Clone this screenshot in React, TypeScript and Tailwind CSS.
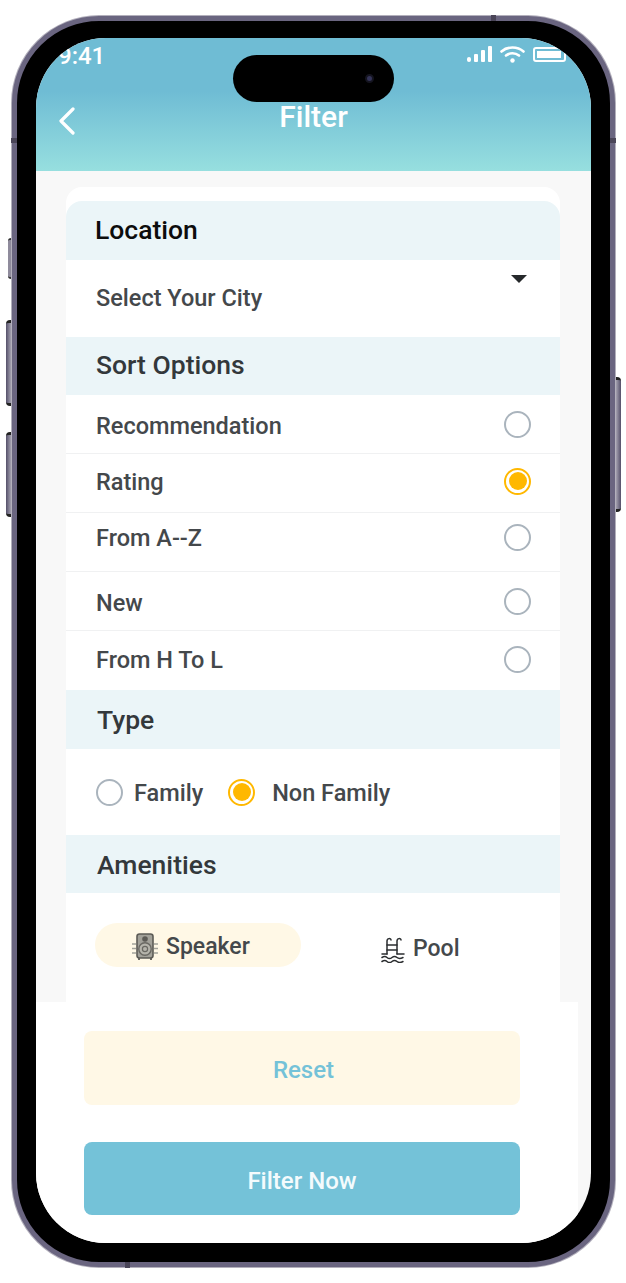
const sortOptions = [
  { label: "Recommendation", text: "mt-[4px]", radio: "mb-[2px]", checked: false },
  { label: "Rating", text: "mb-[2px]", radio: "mb-[6px]", checked: true },
  { label: "From A--Z", text: "mb-[8px]", radio: "mb-[12px]", checked: false },
  { label: "New", text: "mt-[4px]", radio: "mb-[2px]", checked: false },
  { label: "From H To L", text: "mb-[2px]", radio: "mb-[4px]", checked: false },
];

function Radio({ checked, className = "" }: { checked: boolean; className?: string }) {
  if (checked) {
    return (
      <span className={`flex h-[27px] w-[27px] shrink-0 items-center justify-center rounded-full border-2 border-[#ffb800] ${className}`}>
        <span className="h-[18px] w-[18px] rounded-full bg-[#ffb800]" />
      </span>
    );
  }
  return <span className={`h-[27px] w-[27px] shrink-0 rounded-full border-2 border-[#aab4bd] ${className}`} />;
}

function SpeakerIcon() {
  return (
    <svg width="26" height="28" viewBox="0 0 26 28" fill="none">
      <rect x="5" y="1" width="16" height="24" rx="2.5" fill="#a3a29a" stroke="#5c5b56" strokeWidth="1.6" />
      <circle cx="13" cy="6" r="2.8" fill="#5c5b56" />
      <circle cx="13" cy="16" r="6.2" fill="#b5b4ab" stroke="#6a6963" strokeWidth="1.4" />
      <circle cx="13" cy="16" r="2.6" fill="none" stroke="#6a6963" strokeWidth="1.2" />
      <path d="M7 25v2M19 25v2" stroke="#5c5b56" strokeWidth="1.8" />
      <path d="M0 11h4M0 15.500h4M0 20h4M22 11h4M22 15.500h4M22 20h4" stroke="#a3a29a" strokeWidth="1.3" />
    </svg>
  );
}

function PoolIcon() {
  return (
    <svg width="24" height="26" viewBox="0 0 24 26" fill="none" stroke="#2b2e30" strokeWidth="1.5" strokeLinecap="round">
      <path d="M6 17V4c0-3 4-3 4-1" />
      <path d="M16 17V4c0-3 4-3 4-1" />
      <path d="M6 8h10M6 13h10" />
      <path d="M1 17h5M16 17h7" />
      <path d="M1 20.500c2-1.300 3.500-1.300 5 0s3.500 1.300 5 0 3.500-1.300 5 0 3.500 1.300 6 0" />
      <path d="M1 24.500c2-1.300 3.500-1.300 5 0s3.500 1.300 5 0 3.500-1.300 5 0 3.500 1.300 6 0" />
    </svg>
  );
}

export default function App() {
  return (
    <div className="relative h-[1283px] w-[626px] overflow-hidden bg-white pl-[12px] pt-[16px] [font-family:Roboto,sans-serif]">
      {/* Side buttons */}
      <span className="absolute left-[8px] top-[238px] h-[41px] w-[3px] rounded-l-sm border-y-2 border-[#333] bg-[#8f8b9c]" />
      <span className="absolute left-[6px] top-[320px] h-[86px] w-[5px] rounded-l-sm border-y-[3px] border-[#222] bg-gradient-to-r from-[#55506a] to-[#a5a2b0]" />
      <span className="absolute left-[6px] top-[432px] h-[85px] w-[5px] rounded-l-sm border-y-[3px] border-[#222] bg-gradient-to-r from-[#55506a] to-[#a5a2b0]" />
      <span className="absolute left-[616px] top-[377px] h-[135px] w-[5px] rounded-r-sm border-y-[3px] border-[#222] bg-gradient-to-l from-[#55506a] to-[#a5a2b0]" />

      {/* Antenna bands */}
      <span className="absolute left-[491px] top-[15px] z-10 h-[6px] w-[5px] bg-[#4a4558]" />
      <span className="absolute left-[125px] top-[1262px] z-10 h-[6px] w-[5px] bg-[#4a4558]" />
      <span className="absolute left-[11px] top-[138px] z-10 h-[5px] w-[6px] bg-[#4a4558]" />
      <span className="absolute left-[610px] top-[138px] z-10 h-[5px] w-[6px] bg-[#4a4558]" />

      {/* Phone frame */}
      <div className="h-[1251px] w-[603px] rounded-[87px] border-[5px] border-[#6a6580] bg-black pb-[19px] pl-[19px] pr-[19px] pt-[17px] shadow-[0_0_0_1px_#b3b0bc]">
        <div className="relative flex h-full w-full flex-col overflow-hidden rounded-[70px] bg-[#f8f8f8]">
          {/* Dynamic island */}
          <div className="absolute left-[197px] top-[17px] flex h-[47px] w-[161px] items-center justify-end rounded-full bg-black pr-[20px]">
            <span className="h-[9px] w-[9px] rounded-full border-2 border-[#14141f] bg-[#343458]" />
          </div>

          {/* Header */}
          <div className="h-[133px] shrink-0 bg-gradient-to-b from-[#6fbcd4] from-40% to-[#97dfdf] text-white">
            <div className="flex h-[32px] items-center justify-between pl-[22px] pr-[25px] pt-[3px]">
              <span className="text-[24px] font-medium leading-none">9:41</span>
              <div className="mb-[3px] flex items-center gap-[8px]">
                <svg width="25" height="16" viewBox="0 0 25 16" fill="white">
                  <rect x="0" y="11" width="4" height="5" rx="2" />
                  <rect x="7" y="8" width="4" height="8" rx="1" />
                  <rect x="14" y="4" width="4" height="12" rx="1" />
                  <rect x="21" y="0" width="4" height="16" rx="1" />
                </svg>
                <svg width="25" height="17" viewBox="0 0 25 17" fill="none" stroke="white" strokeWidth="2.6" strokeLinecap="round">
                  <path d="M1.500 5.500c6-5.300 16-5.300 22 0" />
                  <path d="M6 9.500c3.800-3 9.200-3 13 0" />
                  <circle cx="12.500" cy="14.500" r="2.200" fill="white" stroke="none" />
                </svg>
                <div className="h-[15px] w-[33px] rounded-[3px] border-2 border-white p-[2px]">
                  <div className="h-full w-[24px] bg-white" />
                </div>
              </div>
            </div>
            <div className="relative mt-[31px] flex items-center justify-center">
              <svg className="absolute left-[22px] top-[6px]" width="18" height="28" viewBox="0 0 18 28" fill="none" stroke="white" strokeWidth="3.2" strokeLinecap="round" strokeLinejoin="round">
                <path d="M15 2 3 14l12 12" />
              </svg>
              <h1 className="text-[30px] font-medium leading-[32px]">Filter</h1>
            </div>
          </div>

          {/* Scrolling body */}
          <div className="h-[831px] shrink-0 overflow-hidden pl-[30px] pr-[31px] pt-[16px]">
            <div className="rounded-[16px] bg-white pt-[14px]">
              <div className="flex h-[59px] items-center rounded-t-[16px] bg-[#ebf5f8] pb-[2px] pl-[29px] text-[26.500px] font-medium text-[#0c0c0c]">
                Location
              </div>
              <div className="relative flex h-[77px] items-center pl-[30px] text-[23.500px] font-medium text-[#44484b]">
                Select Your City
                <span className="absolute right-[33px] top-[15px] h-0 w-0 border-x-[8px] border-t-[8px] border-x-transparent border-t-[#26292b]" />
              </div>

              <div className="flex h-[58px] items-center bg-[#ebf5f8] pb-[2px] pl-[30px] text-[26.500px] font-medium text-[#33383b]">
                Sort Options
              </div>
              {sortOptions.map((o, i) => (
                <div key={o.label} className={`flex h-[59px] items-center justify-between pl-[30px] pr-[29px] pt-[2px] text-[23.500px] font-medium text-[#44484b] ${i < 4 ? "border-b border-[#f0f1f2]" : ""}`}>
                  <span className={o.text}>{o.label}</span>
                  <Radio checked={o.checked} className={o.radio} />
                </div>
              ))}

              <div className="flex h-[59px] items-center bg-[#ebf5f8] pl-[31px] text-[26.500px] font-medium text-[#33383b]">
                Type
              </div>
              <div className="flex h-[86px] items-center pl-[30px] text-[23.500px] font-medium text-[#44484b]">
                <Radio checked={false} />
                <span className="ml-[11px] mt-[4px]">Family</span>
                <Radio checked className="ml-[25px]" />
                <span className="ml-[17px] mt-[4px]">Non Family</span>
              </div>

              <div className="flex h-[58px] items-center bg-[#ebf5f8] pl-[31px] pt-[2px] text-[26.500px] font-medium text-[#33383b]">
                Amenities
              </div>
              <div className="flex items-center pl-[29px] pt-[30px] text-[23px] font-medium text-[#44484b]">
                <div className="flex h-[44px] w-[206px] items-center gap-[8px] rounded-full bg-[#fff8e6] pl-[37px] pt-[4px]">
                  <SpeakerIcon />
                  Speaker
                </div>
                <div className="ml-[80px] flex h-[44px] items-center gap-[8px] pt-[9px]">
                  <PoolIcon />
                  Pool
                </div>
              </div>
              <div className="h-[200px]" />
            </div>
          </div>

          {/* Bottom actions */}
          <div className="flex w-[542px] flex-1 flex-col gap-[37px] bg-white pl-[48px] pt-[29px]">
            <button className="h-[74px] w-[436px] rounded-[8px] bg-[#fff8e6] pl-[3px] pt-[3px] text-[24px] font-medium text-[#74c2d8]">Reset</button>
            <button className="h-[73px] w-[436px] rounded-[8px] bg-[#74c2d8] pt-[5px] text-[24px] font-medium text-[#f4fbfd]">Filter Now</button>
          </div>
        </div>
      </div>
    </div>
  );
}
